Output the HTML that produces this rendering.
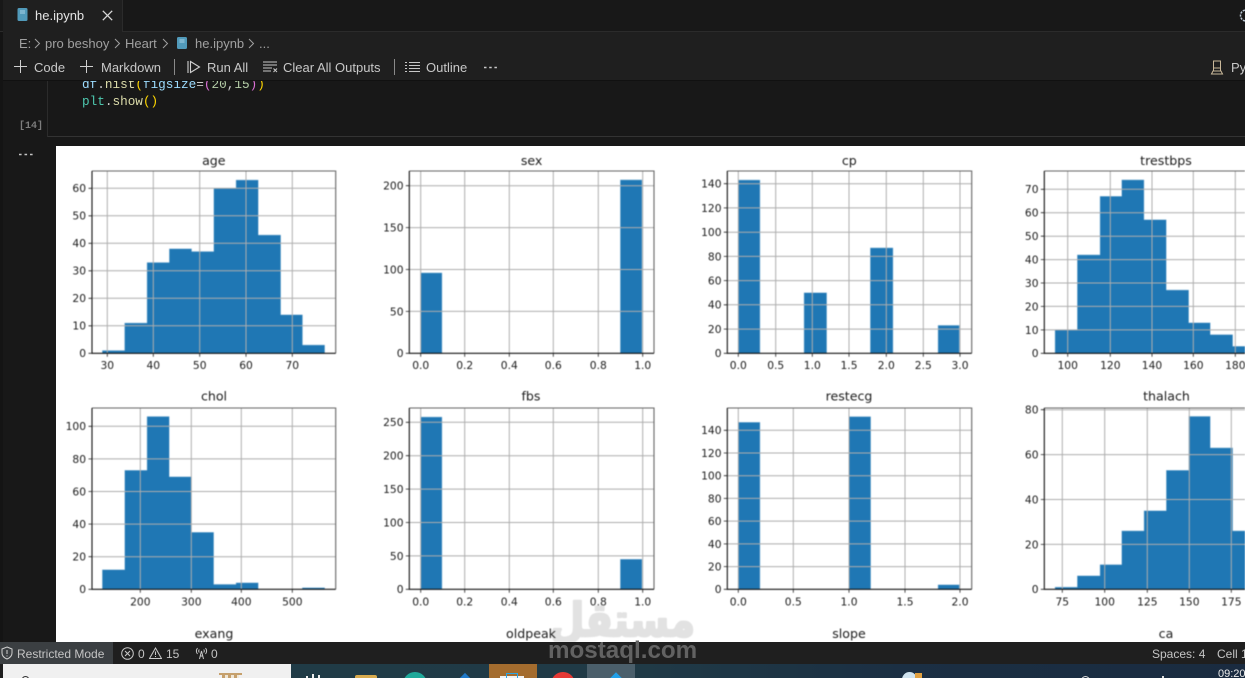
<!DOCTYPE html>
<html lang="en">
<head>
<meta charset="utf-8">
<title>he.ipynb</title>
<style>
html,body{margin:0;padding:0;background:#181818;}
#root{position:relative;width:1245px;height:678px;overflow:hidden;background:#181818;font-family:"Liberation Sans",sans-serif;color:#ccc;}
.a{position:absolute;white-space:nowrap;}
.t{font-size:13px;line-height:16px;}
.bc{color:#a0a0a0;font-size:13px;line-height:16px;top:36px;}
.tb{color:#c8c8c8;font-size:13px;line-height:16px;top:60px;}
.st{color:#c4c4c4;font-size:12px;line-height:14px;top:647px;}
.mono{font-family:"Liberation Mono",monospace;font-size:12.7px;line-height:16px;}
#plot{position:absolute;left:0;top:0;filter:blur(.4px);}
#plot text{font-family:"DejaVu Sans",sans-serif;fill:#1c1c1c;}
.y{font-size:10.7px;text-anchor:end;}
.x{font-size:10.7px;text-anchor:middle;}
.h{font-size:12.6px;text-anchor:middle;}
.b{fill:#1f77b4;stroke:#9cc3de;stroke-width:.5;}
.g{stroke:#adadad;stroke-width:1;fill:none;}
.k{stroke:#222;stroke-width:.8;fill:none;}
.s1{stroke:#111;stroke-width:1.1;fill:none;}
.s2{stroke:#666;stroke-width:1.1;fill:none;}
</style>
</head>
<body>
<div id="root">

<!-- output white -->
<div class="a" style="left:56px;top:146px;width:1189px;height:496px;background:#fff;"></div>

<svg id="plot" width="1245" height="642" viewBox="0 0 1245 642">
<!-- age -->
<path class="b" d="M102.3 353.3V350.5H124.6V323H147V262.5H169.3V248.8H191.6V251.5H213.8V188.3H236V180H258.3V235H280.7V314.8H302.5V345H324.7V353.3Z"/>
<path class="g" d="M107.3 171V353.3M153.3 171V353.3M199.7 171V353.3M246 171V353.3M292.3 171V353.3M92 325.8H335.7M92 298.3H335.7M92 270.8H335.7M92 243.3H335.7M92 215.8H335.7M92 188.3H335.7"/>
<path class="s2" d="M92 171H335.7V353.3"/><path class="s1" d="M92 171V353.3H335.7"/>
<path class="k" d="M107.3 353.3v3.5M153.3 353.3v3.5M199.7 353.3v3.5M246 353.3v3.5M292.3 353.3v3.5M92 353.3h-3.5M92 325.8h-3.5M92 298.3h-3.5M92 270.8h-3.5M92 243.3h-3.5M92 215.8h-3.5M92 188.3h-3.5"/>
<text class="h" x="213.8" y="165">age</text>
<text class="y" x="86" y="357.2">0</text><text class="y" x="86" y="329.7">10</text><text class="y" x="86" y="302.2">20</text><text class="y" x="86" y="274.7">30</text><text class="y" x="86" y="247.2">40</text><text class="y" x="86" y="219.7">50</text><text class="y" x="86" y="192.2">60</text>
<text class="x" x="107.3" y="369">30</text><text class="x" x="153.3" y="369">40</text><text class="x" x="199.7" y="369">50</text><text class="x" x="246" y="369">60</text><text class="x" x="292.3" y="369">70</text>

<!-- sex -->
<path class="b" d="M420.7 353.3V272.9H442V353.3ZM620.3 353.3V179.9H642V353.3Z"/>
<path class="g" d="M420.7 171V353.3M464.7 171V353.3M509.3 171V353.3M553.3 171V353.3M598.3 171V353.3M642.7 171V353.3M409.3 311.4H654M409.3 269.5H654M409.3 227.6H654M409.3 185.7H654"/>
<path class="s2" d="M409.3 171H654V353.3"/><path class="s1" d="M409.3 171V353.3H654"/>
<path class="k" d="M420.7 353.3v3.5M464.7 353.3v3.5M509.3 353.3v3.5M553.3 353.3v3.5M598.3 353.3v3.5M642.7 353.3v3.5M409.3 353.3h-3.5M409.3 311.4h-3.5M409.3 269.5h-3.5M409.3 227.6h-3.5M409.3 185.7h-3.5"/>
<text class="h" x="531.6" y="165">sex</text>
<text class="y" x="403.5" y="357.2">0</text><text class="y" x="403.5" y="315.3">50</text><text class="y" x="403.5" y="273.4">100</text><text class="y" x="403.5" y="231.5">150</text><text class="y" x="403.5" y="189.6">200</text>
<text class="x" x="420.7" y="369">0.0</text><text class="x" x="464.7" y="369">0.2</text><text class="x" x="509.3" y="369">0.4</text><text class="x" x="553.3" y="369">0.6</text><text class="x" x="598.3" y="369">0.8</text><text class="x" x="642.7" y="369">1.0</text>

<!-- cp -->
<path class="b" d="M738.3 353.3V180H760V353.3ZM804 353.3V292.7H826.7V353.3ZM870.3 353.3V247.9H893V353.3ZM938 353.3V325.4H959.3V353.3Z"/>
<path class="g" d="M738.3 171V353.3M775.7 171V353.3M812.3 171V353.3M849 171V353.3M886.3 171V353.3M923.3 171V353.3M960 171V353.3M727.3 329.1H971.7M727.3 304.8H971.7M727.3 280.6H971.7M727.3 256.4H971.7M727.3 232.2H971.7M727.3 207.9H971.7M727.3 183.7H971.7"/>
<path class="s2" d="M727.3 171H971.7V353.3"/><path class="s1" d="M727.3 171V353.3H971.7"/>
<path class="k" d="M738.3 353.3v3.5M775.7 353.3v3.5M812.3 353.3v3.5M849 353.3v3.5M886.3 353.3v3.5M923.3 353.3v3.5M960 353.3v3.5M727.3 353.3h-3.5M727.3 329.1h-3.5M727.3 304.8h-3.5M727.3 280.6h-3.5M727.3 256.4h-3.5M727.3 232.2h-3.5M727.3 207.9h-3.5M727.3 183.7h-3.5"/>
<text class="h" x="849.3" y="165">cp</text>
<text class="y" x="721.5" y="357.2">0</text><text class="y" x="721.5" y="333">20</text><text class="y" x="721.5" y="308.7">40</text><text class="y" x="721.5" y="284.5">60</text><text class="y" x="721.5" y="260.3">80</text><text class="y" x="721.5" y="236.1">100</text><text class="y" x="721.5" y="211.8">120</text><text class="y" x="721.5" y="187.6">140</text>
<text class="x" x="738.3" y="369">0.0</text><text class="x" x="775.7" y="369">0.5</text><text class="x" x="812.3" y="369">1.0</text><text class="x" x="849" y="369">1.5</text><text class="x" x="886.3" y="369">2.0</text><text class="x" x="923.3" y="369">2.5</text><text class="x" x="960" y="369">3.0</text>

<!-- trestbps -->
<path class="b" d="M1055 353.3V329.9H1077.3V254.9H1100V196.3H1121.7V179.9H1144V219.7H1166.3V290H1188.7V322.8H1210.3V334.6H1232.7V346.3H1255V353.3Z"/>
<path class="g" d="M1067.7 171V353.3M1110.3 171V353.3M1152 171V353.3M1193.3 171V353.3M1235.3 171V353.3M1044.3 329.9H1245M1044.3 306.4H1245M1044.3 283H1245M1044.3 259.6H1245M1044.3 236.2H1245M1044.3 212.7H1245M1044.3 189.3H1245"/>
<path class="s2" d="M1044.3 171H1245"/><path class="s1" d="M1044.3 171V353.3H1245"/>
<path class="k" d="M1067.7 353.3v3.5M1110.3 353.3v3.5M1152 353.3v3.5M1193.3 353.3v3.5M1235.3 353.3v3.5M1044.3 353.3h-3.5M1044.3 329.9h-3.5M1044.3 306.4h-3.5M1044.3 283h-3.5M1044.3 259.6h-3.5M1044.3 236.2h-3.5M1044.3 212.7h-3.5M1044.3 189.3h-3.5"/>
<text class="h" x="1166" y="165">trestbps</text>
<text class="y" x="1038.5" y="357.2">0</text><text class="y" x="1038.5" y="333.8">10</text><text class="y" x="1038.5" y="310.3">20</text><text class="y" x="1038.5" y="286.9">30</text><text class="y" x="1038.5" y="263.5">40</text><text class="y" x="1038.5" y="240.1">50</text><text class="y" x="1038.5" y="216.6">60</text><text class="y" x="1038.5" y="193.2">70</text>
<text class="x" x="1067.7" y="369">100</text><text class="x" x="1110.3" y="369">120</text><text class="x" x="1152" y="369">140</text><text class="x" x="1193.3" y="369">160</text><text class="x" x="1235.3" y="369">180</text>

<!-- chol -->
<path class="b" d="M102.3 589.3V569.7H124.7V470.3H147V416.5H169.3V476.8H191.3V532.3H213.7V584.4H236V582.8H258.3V589.3ZM302.3 589.3V587.7H324.7V589.3Z"/>
<path class="g" d="M140.3 408V589.3M191.3 408V589.3M241.3 408V589.3M292.3 408V589.3M92 556.7H335.7M92 524.1H335.7M92 491.5H335.7M92 458.9H335.7M92 426.3H335.7"/>
<path class="s2" d="M92 408H335.7V589.3"/><path class="s1" d="M92 408V589.3H335.7"/>
<path class="k" d="M140.3 589.3v3.5M191.3 589.3v3.5M241.3 589.3v3.5M292.3 589.3v3.5M92 589.3h-3.5M92 556.7h-3.5M92 524.1h-3.5M92 491.5h-3.5M92 458.9h-3.5M92 426.3h-3.5"/>
<text class="h" x="214" y="400.5">chol</text>
<text class="y" x="86" y="593.2">0</text><text class="y" x="86" y="560.6">20</text><text class="y" x="86" y="528">40</text><text class="y" x="86" y="495.4">60</text><text class="y" x="86" y="462.8">80</text><text class="y" x="86" y="430.2">100</text>
<text class="x" x="140.3" y="605.5">200</text><text class="x" x="191.3" y="605.5">300</text><text class="x" x="241.3" y="605.5">400</text><text class="x" x="292.3" y="605.5">500</text>

<!-- fbs -->
<path class="b" d="M420.7 589.3V417H442V589.3ZM620.3 589.3V559.2H642V589.3Z"/>
<path class="g" d="M420.7 408V589.3M464.7 408V589.3M509.3 408V589.3M553.3 408V589.3M598.3 408V589.3M642.7 408V589.3M409.3 555.9H654M409.3 522.5H654M409.3 489.1H654M409.3 455.7H654M409.3 422.3H654"/>
<path class="s2" d="M409.3 408H654V589.3"/><path class="s1" d="M409.3 408V589.3H654"/>
<path class="k" d="M420.7 589.3v3.5M464.7 589.3v3.5M509.3 589.3v3.5M553.3 589.3v3.5M598.3 589.3v3.5M642.7 589.3v3.5M409.3 589.3h-3.5M409.3 555.9h-3.5M409.3 522.5h-3.5M409.3 489.1h-3.5M409.3 455.7h-3.5M409.3 422.3h-3.5"/>
<text class="h" x="531" y="400.5">fbs</text>
<text class="y" x="403.5" y="593.2">0</text><text class="y" x="403.5" y="559.8">50</text><text class="y" x="403.5" y="526.4">100</text><text class="y" x="403.5" y="493">150</text><text class="y" x="403.5" y="459.6">200</text><text class="y" x="403.5" y="426.2">250</text>
<text class="x" x="420.7" y="605.5">0.0</text><text class="x" x="464.7" y="605.5">0.2</text><text class="x" x="509.3" y="605.5">0.4</text><text class="x" x="553.3" y="605.5">0.6</text><text class="x" x="598.3" y="605.5">0.8</text><text class="x" x="642.7" y="605.5">1.0</text>

<!-- restecg -->
<path class="b" d="M738.3 589.3V422.3H760V589.3ZM849.3 589.3V416.6H870.7V589.3ZM938 589.3V584.8H959.3V589.3Z"/>
<path class="g" d="M738.3 408V589.3M793.3 408V589.3M849 408V589.3M905 408V589.3M960 408V589.3M727.3 566.6H971.7M727.3 543.9H971.7M727.3 521.1H971.7M727.3 498.4H971.7M727.3 475.7H971.7M727.3 453H971.7M727.3 430.3H971.7"/>
<path class="s2" d="M727.3 408H971.7V589.3"/><path class="s1" d="M727.3 408V589.3H971.7"/>
<path class="k" d="M738.3 589.3v3.5M793.3 589.3v3.5M849 589.3v3.5M905 589.3v3.5M960 589.3v3.5M727.3 589.3h-3.5M727.3 566.6h-3.5M727.3 543.9h-3.5M727.3 521.1h-3.5M727.3 498.4h-3.5M727.3 475.7h-3.5M727.3 453h-3.5M727.3 430.3h-3.5"/>
<text class="h" x="849" y="400.5">restecg</text>
<text class="y" x="721.5" y="593.2">0</text><text class="y" x="721.5" y="570.5">20</text><text class="y" x="721.5" y="547.8">40</text><text class="y" x="721.5" y="525">60</text><text class="y" x="721.5" y="502.3">80</text><text class="y" x="721.5" y="479.6">100</text><text class="y" x="721.5" y="456.9">120</text><text class="y" x="721.5" y="434.2">140</text>
<text class="x" x="738.3" y="605.5">0.0</text><text class="x" x="793.3" y="605.5">0.5</text><text class="x" x="849" y="605.5">1.0</text><text class="x" x="905" y="605.5">1.5</text><text class="x" x="960" y="605.5">2.0</text>

<!-- thalach -->
<path class="b" d="M1055 589.3V587.1H1077.3V575.8H1100V564.6H1121.7V530.9H1144V510.7H1166.3V470.3H1188.7V416.4H1210.3V447.9H1232.7V530.9H1255V589.3Z"/>
<path class="g" d="M1062.3 408V589.3M1104.7 408V589.3M1147.3 408V589.3M1189.3 408V589.3M1231.3 408V589.3M1044.3 544.4H1245M1044.3 499.5H1245M1044.3 454.6H1245M1044.3 409.7H1245"/>
<path class="s2" d="M1044.3 408H1245"/><path class="s1" d="M1044.3 408V589.3H1245"/>
<path class="k" d="M1062.3 589.3v3.5M1104.7 589.3v3.5M1147.3 589.3v3.5M1189.3 589.3v3.5M1231.3 589.3v3.5M1044.3 589.3h-3.5M1044.3 544.4h-3.5M1044.3 499.5h-3.5M1044.3 454.6h-3.5M1044.3 409.7h-3.5"/>
<text class="h" x="1166.5" y="400.5">thalach</text>
<text class="y" x="1038.5" y="593.2">0</text><text class="y" x="1038.5" y="548.3">20</text><text class="y" x="1038.5" y="503.4">40</text><text class="y" x="1038.5" y="458.5">60</text><text class="y" x="1038.5" y="413.6">80</text>
<text class="x" x="1062.3" y="605.5">75</text><text class="x" x="1104.7" y="605.5">100</text><text class="x" x="1147.3" y="605.5">125</text><text class="x" x="1189.3" y="605.5">150</text><text class="x" x="1231.3" y="605.5">175</text>

<!-- watermark arabic -->
<text x="622.5" y="636" text-anchor="middle" textLength="145" lengthAdjust="spacingAndGlyphs" style="font-family:'DejaVu Sans',sans-serif;font-weight:bold;font-size:46px;fill:#e2e2e2;stroke:#e2e2e2;stroke-width:2.5;stroke-linejoin:round;" direction="rtl">مستقل</text>

<!-- row 3 titles -->
<text class="h" x="214" y="638">exang</text>
<text class="h" x="531" y="638">oldpeak</text>
<text class="h" x="849" y="638">slope</text>
<text class="h" x="1166" y="638">ca</text>
</svg>

<!-- left strip -->
<div class="a" style="left:0;top:0;width:3px;height:642px;background:#141414;"></div>

<!-- tab bar -->
<div class="a" style="left:0;top:0;width:1245px;height:31px;background:#181818;border-bottom:1px solid #2b2b2b;"></div>
<div class="a" style="left:3px;top:0;width:119px;height:32px;background:#1f1f1f;border-right:1px solid #2b2b2b;"></div>
<svg class="a" style="left:17px;top:8px;" width="11" height="13" viewBox="0 0 11 13"><rect x="0.5" y="0" width="10" height="13" rx="1.5" fill="#519aba"/><path d="M3 3h5M3 5h5" stroke="#a9d2e6" stroke-width="1"/></svg>
<div class="a t" style="left:35px;top:8px;color:#e4e4e4;">he.ipynb</div>
<svg class="a" style="left:102px;top:10px;" width="11" height="11" viewBox="0 0 11 11"><path d="M.8.8 10.2 10.2M10.2.8.8 10.2" stroke="#d8d8d8" stroke-width="1.3" fill="none"/></svg>
<svg class="a" style="left:1239px;top:8px;" width="6" height="15" viewBox="0 0 6 15"><circle cx="7" cy="7.5" r="5.5" fill="none" stroke="#b8c4d0" stroke-width="1.5" stroke-dasharray="2.2 1"/></svg>

<!-- breadcrumb + toolbar -->
<div class="a" style="left:3px;top:32px;width:1242px;height:48px;background:#1f1f1f;border-bottom:1px solid #111;"></div>
<div class="a bc" style="left:19px;">E:</div>
<svg class="a" style="left:34px;top:38px;" width="7" height="11" viewBox="0 0 7 11"><path d="M1 1l4.5 4.5L1 10" stroke="#a0a0a0" fill="none"/></svg>
<div class="a bc" style="left:45px;">pro beshoy</div>
<svg class="a" style="left:114px;top:38px;" width="7" height="11" viewBox="0 0 7 11"><path d="M1 1l4.5 4.5L1 10" stroke="#a0a0a0" fill="none"/></svg>
<div class="a bc" style="left:125px;">Heart</div>
<svg class="a" style="left:162px;top:38px;" width="7" height="11" viewBox="0 0 7 11"><path d="M1 1l4.5 4.5L1 10" stroke="#a0a0a0" fill="none"/></svg>
<svg class="a" style="left:177px;top:37px;" width="10" height="12" viewBox="0 0 10 12"><rect x="0" y="0" width="10" height="12" rx="1.5" fill="#519aba"/><path d="M2.5 3h5M2.5 5h5" stroke="#a9d2e6" stroke-width="1"/></svg>
<div class="a bc" style="left:195px;">he.ipynb</div>
<svg class="a" style="left:248px;top:38px;" width="7" height="11" viewBox="0 0 7 11"><path d="M1 1l4.5 4.5L1 10" stroke="#a0a0a0" fill="none"/></svg>
<div class="a bc" style="left:259px;">...</div>

<svg class="a" style="left:14px;top:60px;" width="13" height="13" viewBox="0 0 13 13"><path d="M6.5 0V13M0 6.5H13" stroke="#d0d0d0" fill="none"/></svg>
<div class="a tb" style="left:34px;">Code</div>
<svg class="a" style="left:80px;top:60px;" width="13" height="13" viewBox="0 0 13 13"><path d="M6.5 0V13M0 6.5H13" stroke="#d0d0d0" fill="none"/></svg>
<div class="a tb" style="left:101px;">Markdown</div>
<div class="a" style="left:174px;top:59px;width:1px;height:16px;background:#8a8a8a;"></div>
<svg class="a" style="left:187px;top:60px;" width="14" height="14" viewBox="0 0 14 14"><path d="M1 1V13M3.5 1.5 12.5 7 3.500 12.500Z" stroke="#d0d0d0" stroke-width="1.1" fill="none"/></svg>
<div class="a tb" style="left:207px;">Run All</div>
<svg class="a" style="left:263px;top:61px;" width="15" height="12" viewBox="0 0 15 12"><path d="M0 1H14M0 4H14M0 7H9M0 10H8M10.500 7.500l3.500 3.500M14 7.500l-3.500 3.500" stroke="#c8c8c8" fill="none"/></svg>
<div class="a tb" style="left:283px;">Clear All Outputs</div>
<div class="a" style="left:394px;top:59px;width:1px;height:16px;background:#8a8a8a;"></div>
<svg class="a" style="left:405px;top:62px;" width="15" height="10" viewBox="0 0 15 10"><path d="M0 .5H2M4 .5H15M0 3.500H2M4 3.500H15M0 6.500H2M4 6.500H15M0 9.500H2M4 9.500H15" stroke="#c8c8c8" fill="none"/></svg>
<div class="a tb" style="left:426px;">Outline</div>
<svg class="a" style="left:484px;top:66px;" width="13" height="3" viewBox="0 0 13 3"><path d="M0 1.500h2.500M5.200 1.500h2.500M10.400 1.500h2.500" stroke="#c8c8c8" stroke-width="1.600" fill="none"/></svg>
<svg class="a" style="left:1210px;top:60px;" width="14" height="15" viewBox="0 0 14 15"><path d="M3.500 1H10.500V11H3.500ZM3.500 8H10.500M1.500 14 3 11H11L12.500 14ZM1 14H13" stroke="#c9b89a" fill="none"/></svg>
<div class="a tb" style="left:1231px;">Py</div>

<!-- code cell -->
<div class="a" style="left:47px;top:81px;width:1198px;height:55px;border-left:1px solid #2b2b2b;border-bottom:1px solid #333;background:#181818;overflow:hidden;">
  <div class="a mono" style="left:34px;top:-4px;color:#ccc;"><span style="color:#9cdcfe">df</span>.<span style="color:#dcdcaa">hist</span><span style="color:#ffd700">(</span><span style="color:#9cdcfe">figsize</span>=<span style="color:#da70d6">(</span><span style="color:#b5cea8">20</span>,<span style="color:#b5cea8">15</span><span style="color:#da70d6">)</span><span style="color:#ffd700">)</span></div>
  <div class="a mono" style="left:34px;top:13px;color:#ccc;"><span style="color:#4ec9b0">plt</span>.<span style="color:#dcdcaa">show</span><span style="color:#ffd700">()</span></div>
</div>
<div class="a" style="left:19px;top:120px;font-family:'Liberation Mono',monospace;font-size:10px;font-weight:bold;line-height:13px;color:#7d7d7d;">[14]</div>
<svg class="a" style="left:19px;top:153px;" width="14" height="3" viewBox="0 0 14 3"><path d="M0 1.500h2.600M5.500 1.500h2.600M11 1.500h2.600" stroke="#c4c4c4" stroke-width="1.600" fill="none"/></svg>

<!-- status bar -->
<div class="a" style="left:0;top:642px;width:1245px;height:22px;background:#1f1f1f;"></div>
<div class="a" style="left:0;top:642px;width:113px;height:22px;background:#3b3f42;"></div>
<svg class="a" style="left:1px;top:646px;" width="12" height="14" viewBox="0 0 12 14"><path d="M6 1 11 3V7C11 10 8.500 12 6 13 3.500 12 1 10 1 7V3ZM6 4V8M6 9.500V10.500" stroke="#d0d0d0" fill="none"/></svg>
<div class="a st" style="left:17px;">Restricted Mode</div>
<svg class="a" style="left:121px;top:647px;" width="13" height="13" viewBox="0 0 13 13"><circle cx="6.500" cy="6.500" r="5.800" stroke="#c8c8c8" fill="none"/><path d="M4 4l5 5M9 4l-5 5" stroke="#c8c8c8" fill="none"/></svg>
<div class="a st" style="left:138px;">0</div>
<svg class="a" style="left:149px;top:647px;" width="13" height="12" viewBox="0 0 13 12"><path d="M6.500 1 12.500 11.500H.5ZM6.500 4.500V8M6.500 9V10" stroke="#c8c8c8" fill="none"/></svg>
<div class="a st" style="left:166px;">15</div>
<svg class="a" style="left:195px;top:646px;" width="13" height="14" viewBox="0 0 13 14"><path d="M4.500 13 6.500 5 8.500 13M5 10H8M2.500 2C1 4 1 6 2.500 8M10.500 2C12 4 12 6 10.500 8M4.300 3.500C3.500 4.500 3.500 5.500 4.300 6.500M8.700 3.500C9.500 4.500 9.500 5.500 8.700 6.500" stroke="#c8c8c8" fill="none"/></svg>
<div class="a st" style="left:211px;">0</div>
<div class="a st" style="left:1152px;">Spaces: 4</div>
<div class="a st" style="left:1217px;">Cell 1</div>

<!-- taskbar -->
<div class="a" style="left:0;top:664px;width:1245px;height:14px;background:linear-gradient(90deg,#203c46 0,#203a46 640px,#1b2f43 900px,#1a2b40 100%);overflow:hidden;">
  <div class="a" style="left:0;top:0;width:3px;height:14px;background:#1d1d1d;"></div>
  <div class="a" style="left:3px;top:0;width:288px;height:14px;background:#f0f0f0;"></div>
  <div class="a" style="left:21px;top:12px;width:7px;height:9px;border:1.500px solid #333;border-radius:50%;"></div>
  <div class="a" style="left:219px;top:9px;width:23px;height:2px;background:#c6a06c;"></div>
  <div class="a" style="left:222px;top:11px;width:17px;height:3px;background:repeating-linear-gradient(90deg,#c6a06c 0 3px,#efe6d6 3px 6px);"></div>
  <div class="a" style="left:306px;top:12px;width:2px;height:2px;background:#eee;"></div>
  <div class="a" style="left:312px;top:10px;width:2px;height:4px;background:#eee;"></div>
  <div class="a" style="left:318px;top:11px;width:2px;height:3px;background:#eee;"></div>
  <div class="a" style="left:355px;top:11px;width:22px;height:4px;background:#d8ab4e;border-radius:2px 2px 0 0;"></div>
  <div class="a" style="left:403px;top:8px;width:24px;height:24px;border-radius:50%;background:#1fa99a;"></div>
  <div class="a" style="left:455px;top:13px;width:20px;height:20px;background:#1e78c8;transform:rotate(45deg);"></div>
  <div class="a" style="left:489px;top:0;width:48px;height:14px;background:#a46c2e;"></div>
  <div class="a" style="left:500px;top:12px;width:24px;height:3px;background:#f2f2f2;"></div>
  <div class="a" style="left:506px;top:9px;width:12px;height:6px;border:1.500px solid #2aa5e6;box-sizing:border-box;"></div>
  <div class="a" style="left:551px;top:8px;width:24px;height:24px;border-radius:50%;background:#e53935;"></div>
  <div class="a" style="left:587px;top:0;width:48px;height:14px;background:#4b5f6b;"></div>
  <div class="a" style="left:607px;top:12px;width:18px;height:18px;background:#22a0e8;transform:rotate(45deg);"></div>
  <div class="a" style="left:902px;top:8px;width:15px;height:15px;border-radius:50%;background:#cfe3ef;"></div>
  <div class="a" style="left:915px;top:9px;width:7px;height:7px;background:#e0a040;"></div>
  <div class="a" style="left:1081px;top:12px;width:7px;height:7px;border:1px solid #ddd;border-radius:50%;"></div>
  <div class="a" style="left:1162px;top:12px;width:2px;height:2px;background:#ddd;"></div>
  <div class="a" style="left:1218px;top:4px;font-size:11px;line-height:13px;color:#eaeaea;">09:20</div>
</div>

<!-- watermark latin -->
<div class="a" style="left:548px;top:637px;font-family:'Liberation Sans',sans-serif;font-weight:bold;font-size:24.2px;line-height:28px;color:#626262;">mostaql.com</div>

</div>
</body>
</html>
